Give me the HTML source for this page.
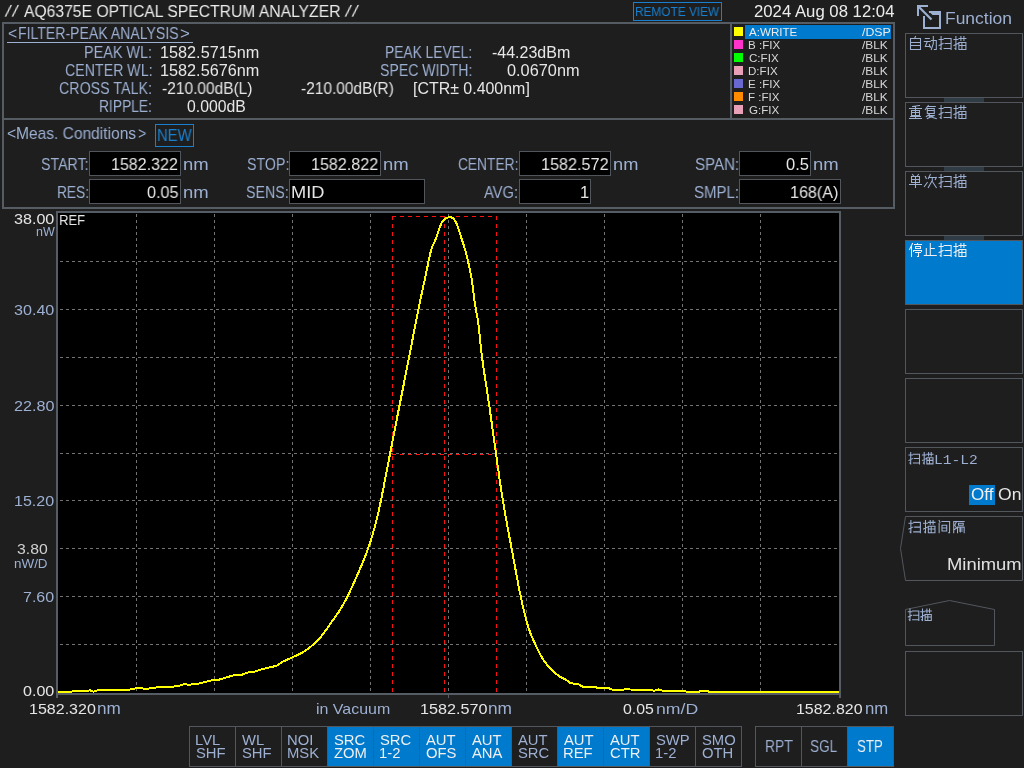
<!DOCTYPE html>
<html><head><meta charset="utf-8"><style>
html,body{margin:0;padding:0;}
body{width:1024px;height:768px;overflow:hidden;background:#1e1e1e;position:relative;font-family:"Liberation Sans", sans-serif;}
.t{position:absolute;white-space:nowrap;transform-origin:0 0;will-change:transform;}
.r{position:absolute;box-sizing:border-box;}
svg{position:absolute;left:0;top:0;}
</style></head><body>
<div class="t" style="left:4.40px;top:3.00px;font-size:17.0px;line-height:17.0px;color:#ececec;transform:skewX(-12deg);transform-origin:0 100%;">/</div>
<div class="t" style="left:11.20px;top:3.00px;font-size:17.0px;line-height:17.0px;color:#ececec;transform:skewX(-12deg);transform-origin:0 100%;">/</div>
<div class="t" style="left:344.40px;top:3.00px;font-size:17.0px;line-height:17.0px;color:#ececec;transform:skewX(-12deg);transform-origin:0 100%;">/</div>
<div class="t" style="left:351.20px;top:3.00px;font-size:17.0px;line-height:17.0px;color:#ececec;transform:skewX(-12deg);transform-origin:0 100%;">/</div>
<div class="t" style="left:23.92px;top:3.00px;font-size:16.5px;line-height:16.5px;color:#ececec;transform:scaleX(0.9507);">AQ6375E OPTICAL SPECTRUM ANALYZER</div>
<div class="r" style="left:633px;top:2px;width:89px;height:19px;border:1px solid #1880cf;"></div>
<div class="t" style="left:634.65px;top:6.00px;font-size:12.5px;line-height:12.5px;color:#1880cf;transform:scaleX(0.9468);">REMOTE VIEW</div>
<div class="t" style="left:753.96px;top:3.00px;font-size:16.5px;line-height:16.5px;color:#ececec;transform:scaleX(1.0139);">2024 Aug 08 12:04</div>
<div class="t" style="left:945.20px;top:10.00px;font-size:16.5px;line-height:16.5px;color:#9db0d2;transform:scaleX(1.0577);">Function</div>
<svg width="1024" height="768" style="position:absolute;left:0;top:0">
<path d="M918,16 V6 H928" fill="none" stroke="#9db0d2" stroke-width="2"/>
<path d="M919,7 L931.5,19.5" fill="none" stroke="#9db0d2" stroke-width="2.2"/>
<path d="M924,16 V28 H940 V12 H929" fill="none" stroke="#9db0d2" stroke-width="2"/>
<path d="M928.5,11 H941 V15 H932.5 Z" fill="#9db0d2"/>
</svg>
<div class="r" style="left:2px;top:22px;width:893px;height:187px;border:2px solid #565c64;"></div>
<div class="r" style="left:2px;top:118px;width:893px;height:2px;background:#565c64;"></div>
<div class="r" style="left:730px;top:22px;width:2px;height:97px;background:#565c64;"></div>
<div class="t" style="left:7.95px;top:26.00px;font-size:15.7px;line-height:15.7px;color:#9db0d2;transform:scaleX(0.9587);">&lt;</div>
<div class="t" style="left:17.67px;top:26.00px;font-size:15.7px;line-height:15.7px;color:#9db0d2;transform:scaleX(0.8969);">FILTER-PEAK ANALYSIS</div>
<div class="t" style="left:179.65px;top:26.00px;font-size:15.7px;line-height:15.7px;color:#9db0d2;transform:scaleX(1.0769);">&gt;</div>
<div class="r" style="left:7px;top:42px;width:186px;height:1px;background:#9db0d2;"></div>
<div class="t" style="left:84.45px;top:45.00px;font-size:15.7px;line-height:15.7px;color:#9db0d2;transform:scaleX(0.9183);">PEAK WL:</div>
<div class="t" style="left:64.89px;top:63.00px;font-size:15.7px;line-height:15.7px;color:#9db0d2;transform:scaleX(0.9049);">CENTER WL:</div>
<div class="t" style="left:59.49px;top:81.00px;font-size:15.7px;line-height:15.7px;color:#9db0d2;transform:scaleX(0.9085);">CROSS TALK:</div>
<div class="t" style="left:99.49px;top:99.00px;font-size:15.7px;line-height:15.7px;color:#9db0d2;transform:scaleX(0.8806);">RIPPLE:</div>
<div class="t" style="left:160.08px;top:45.00px;font-size:15.7px;line-height:15.7px;color:#e6e6e6;transform:scaleX(1.0351);">1582.5715nm</div>
<div class="t" style="left:160.08px;top:63.00px;font-size:15.7px;line-height:15.7px;color:#e6e6e6;transform:scaleX(1.0351);">1582.5676nm</div>
<div class="t" style="left:162.00px;top:81.00px;font-size:15.7px;line-height:15.7px;color:#e6e6e6;transform:scaleX(0.9882);">-210.00dB(L)</div>
<div class="t" style="left:186.67px;top:99.00px;font-size:15.7px;line-height:15.7px;color:#e6e6e6;transform:scaleX(1.0058);">0.000dB</div>
<div class="t" style="left:385.20px;top:45.00px;font-size:15.7px;line-height:15.7px;color:#9db0d2;transform:scaleX(0.8782);">PEAK LEVEL:</div>
<div class="t" style="left:379.97px;top:63.00px;font-size:15.7px;line-height:15.7px;color:#9db0d2;transform:scaleX(0.8969);">SPEC WIDTH:</div>
<div class="t" style="left:491.78px;top:45.00px;font-size:15.7px;line-height:15.7px;color:#e6e6e6;transform:scaleX(1.0194);">-44.23dBm</div>
<div class="t" style="left:506.85px;top:63.00px;font-size:15.7px;line-height:15.7px;color:#e6e6e6;transform:scaleX(1.0405);">0.0670nm</div>
<div class="t" style="left:301.20px;top:81.00px;font-size:15.7px;line-height:15.7px;color:#e6e6e6;transform:scaleX(0.9854);">-210.00dB(R)</div>
<div class="t" style="left:413.28px;top:81.00px;font-size:15.7px;line-height:15.7px;color:#e6e6e6;transform:scaleX(1.0159);">[CTR± 0.400nm]</div>
<div class="r" style="left:745px;top:25px;width:146px;height:14px;background:#007acc;"></div>
<div class="r" style="left:734px;top:27px;width:9px;height:9px;background:#ffff00;"></div>
<div class="t" style="left:749.34px;top:26.00px;font-size:11.6px;line-height:11.6px;color:#ececec;">A:WRITE</div>
<div class="t" style="left:861.80px;top:26.00px;font-size:11.6px;line-height:11.6px;color:#ececec;transform:scaleX(1.0662);">/DSP</div>
<div class="r" style="left:734px;top:40px;width:9px;height:9px;background:#ff33cc;"></div>
<div class="t" style="left:748.47px;top:39.00px;font-size:11.6px;line-height:11.6px;color:#d8d8d8;">B :FIX</div>
<div class="t" style="left:861.80px;top:39.00px;font-size:11.6px;line-height:11.6px;color:#d8d8d8;transform:scaleX(1.0241);">/BLK</div>
<div class="r" style="left:734px;top:53px;width:9px;height:9px;background:#00ff00;"></div>
<div class="t" style="left:748.82px;top:52.00px;font-size:11.6px;line-height:11.6px;color:#d8d8d8;">C:FIX</div>
<div class="t" style="left:861.80px;top:52.00px;font-size:11.6px;line-height:11.6px;color:#d8d8d8;transform:scaleX(1.0241);">/BLK</div>
<div class="r" style="left:734px;top:66px;width:9px;height:9px;background:#e8a0b8;"></div>
<div class="t" style="left:748.47px;top:65.00px;font-size:11.6px;line-height:11.6px;color:#d8d8d8;">D:FIX</div>
<div class="t" style="left:861.80px;top:65.00px;font-size:11.6px;line-height:11.6px;color:#d8d8d8;transform:scaleX(1.0241);">/BLK</div>
<div class="r" style="left:734px;top:79px;width:9px;height:9px;background:#6868d0;"></div>
<div class="t" style="left:748.47px;top:78.00px;font-size:11.6px;line-height:11.6px;color:#d8d8d8;">E :FIX</div>
<div class="t" style="left:861.80px;top:78.00px;font-size:11.6px;line-height:11.6px;color:#d8d8d8;transform:scaleX(1.0241);">/BLK</div>
<div class="r" style="left:734px;top:92px;width:9px;height:9px;background:#ff8c00;"></div>
<div class="t" style="left:748.47px;top:91.00px;font-size:11.6px;line-height:11.6px;color:#d8d8d8;">F :FIX</div>
<div class="t" style="left:861.80px;top:91.00px;font-size:11.6px;line-height:11.6px;color:#d8d8d8;transform:scaleX(1.0241);">/BLK</div>
<div class="r" style="left:734px;top:105px;width:9px;height:9px;background:#e8a0b8;"></div>
<div class="t" style="left:748.82px;top:104.00px;font-size:11.6px;line-height:11.6px;color:#d8d8d8;">G:FIX</div>
<div class="t" style="left:861.80px;top:104.00px;font-size:11.6px;line-height:11.6px;color:#d8d8d8;transform:scaleX(1.0241);">/BLK</div>
<div class="t" style="left:6.73px;top:126.00px;font-size:15.7px;line-height:15.7px;color:#9db0d2;transform:scaleX(0.9850);">&lt;</div>
<div class="t" style="left:16.46px;top:126.00px;font-size:15.7px;line-height:15.7px;color:#9db0d2;transform:scaleX(0.9910);">Meas. Conditions</div>
<div class="t" style="left:138.29px;top:126.00px;font-size:15.7px;line-height:15.7px;color:#9db0d2;transform:scaleX(0.9062);">&gt;</div>
<div class="r" style="left:155px;top:124px;width:39px;height:23px;border:1px solid #1880cf;"></div>
<div class="t" style="left:156.81px;top:128.00px;font-size:16.0px;line-height:16.0px;color:#1880cf;transform:scaleX(0.9278);">NEW</div>
<div class="r" style="left:89px;top:151px;width:92px;height:25px;background:#000;border:1px solid #51565d;"></div>
<div class="r" style="left:89px;top:179px;width:92px;height:25px;background:#000;border:1px solid #51565d;"></div>
<div class="r" style="left:289px;top:151px;width:92px;height:25px;background:#000;border:1px solid #51565d;"></div>
<div class="r" style="left:289px;top:179px;width:136px;height:25px;background:#000;border:1px solid #51565d;"></div>
<div class="r" style="left:519px;top:151px;width:92px;height:25px;background:#000;border:1px solid #51565d;"></div>
<div class="r" style="left:519px;top:179px;width:72px;height:25px;background:#000;border:1px solid #51565d;"></div>
<div class="r" style="left:739px;top:151px;width:72px;height:25px;background:#000;border:1px solid #51565d;"></div>
<div class="r" style="left:739px;top:179px;width:102px;height:25px;background:#000;border:1px solid #51565d;"></div>
<div class="t" style="left:40.96px;top:157.00px;font-size:15.7px;line-height:15.7px;color:#9db0d2;transform:scaleX(0.9054);">START:</div>
<div class="t" style="left:56.50px;top:185.00px;font-size:15.7px;line-height:15.7px;color:#9db0d2;transform:scaleX(0.8758);">RES:</div>
<div class="t" style="left:246.56px;top:157.00px;font-size:15.7px;line-height:15.7px;color:#9db0d2;transform:scaleX(0.9045);">STOP:</div>
<div class="t" style="left:246.16px;top:185.00px;font-size:15.7px;line-height:15.7px;color:#9db0d2;transform:scaleX(0.9071);">SENS:</div>
<div class="t" style="left:457.91px;top:157.00px;font-size:15.7px;line-height:15.7px;color:#9db0d2;transform:scaleX(0.8763);">CENTER:</div>
<div class="t" style="left:484.33px;top:185.00px;font-size:15.7px;line-height:15.7px;color:#9db0d2;transform:scaleX(0.9353);">AVG:</div>
<div class="t" style="left:694.82px;top:157.00px;font-size:15.7px;line-height:15.7px;color:#9db0d2;transform:scaleX(0.9611);">SPAN:</div>
<div class="t" style="left:693.92px;top:185.00px;font-size:15.7px;line-height:15.7px;color:#9db0d2;transform:scaleX(0.9560);">SMPL:</div>
<div class="t" style="left:111.40px;top:156.00px;font-size:16.5px;line-height:16.5px;color:#e6e6e6;transform:scaleX(0.9709);">1582.322</div>
<div class="t" style="left:146.65px;top:184.00px;font-size:16.5px;line-height:16.5px;color:#e6e6e6;transform:scaleX(0.9781);">0.05</div>
<div class="t" style="left:311.49px;top:156.00px;font-size:16.5px;line-height:16.5px;color:#e6e6e6;transform:scaleX(0.9754);">1582.822</div>
<div class="t" style="left:290.84px;top:184.00px;font-size:16.5px;line-height:16.5px;color:#e6e6e6;transform:scaleX(1.1055);">MID</div>
<div class="t" style="left:541.19px;top:156.00px;font-size:16.5px;line-height:16.5px;color:#e6e6e6;transform:scaleX(0.9814);">1582.572</div>
<div class="t" style="left:579.76px;top:184.00px;font-size:16.5px;line-height:16.5px;color:#e6e6e6;">1</div>
<div class="t" style="left:785.64px;top:156.00px;font-size:16.5px;line-height:16.5px;color:#e6e6e6;transform:scaleX(0.9947);">0.5</div>
<div class="t" style="left:790.49px;top:184.00px;font-size:16.5px;line-height:16.5px;color:#e6e6e6;transform:scaleX(0.9773);">168(A)</div>
<div class="t" style="left:183.10px;top:156.00px;font-size:17.0px;line-height:17.0px;color:#9db0d2;transform:scaleX(1.0874);">nm</div>
<div class="t" style="left:183.10px;top:184.00px;font-size:17.0px;line-height:17.0px;color:#9db0d2;transform:scaleX(1.0874);">nm</div>
<div class="t" style="left:383.10px;top:156.00px;font-size:17.0px;line-height:17.0px;color:#9db0d2;transform:scaleX(1.0874);">nm</div>
<div class="t" style="left:613.11px;top:156.00px;font-size:17.0px;line-height:17.0px;color:#9db0d2;transform:scaleX(1.0734);">nm</div>
<div class="t" style="left:813.10px;top:156.00px;font-size:17.0px;line-height:17.0px;color:#9db0d2;transform:scaleX(1.0874);">nm</div>
<div class="r" style="left:56px;top:211px;width:785px;height:484px;background:#000;border:2px solid #565c64;"></div>
<div class="r" style="left:56px;top:695px;width:2px;height:3px;background:#565c64;"></div>
<div class="r" style="left:839px;top:695px;width:2px;height:3px;background:#565c64;"></div>
<div class="r" style="left:448px;top:695px;width:1px;height:3px;background:#565c64;"></div>
<svg width="1024" height="768" style="position:absolute;left:0;top:0" shape-rendering="crispEdges">
<path d="M136.5,214V693M214.5,214V693M292.5,214V693M370.5,214V693M448.5,214V693M526.5,214V693M604.5,214V693M682.5,214V693M760.5,214V693M60,261.5H839M60,309.5H839M60,357.5H839M60,405.5H839M60,453.5H839M60,500.5H839M60,548.5H839M60,596.5H839M60,644.5H839" stroke="#737373" stroke-width="1" stroke-dasharray="3 3" fill="none"/>
<path d="M392.5,216V693M444.5,216V693M496.5,216V693" stroke="#ff1010" stroke-width="1" stroke-dasharray="4 4" fill="none"/>
<path d="M392,216.5H497M392,454.5H497" stroke="#ff1010" stroke-width="1" stroke-dasharray="4 4" fill="none"/>
</svg>
<svg width="1024" height="768" style="position:absolute;left:0;top:0" shape-rendering="crispEdges"><path d="M58.3,691.8 L87.0,691.2 L90.0,690.2 L93.5,691.8 L97.0,690.4 L106.0,689.6 L110.7,690.0 L129.4,689.6 L135.7,688.4 L142.7,688.4 L146.6,689.0 L153.7,687.6 L171.6,686.8 L180.0,685.6 L184.1,684.0 L187.2,684.6 L195.0,684.4 L202.9,682.6 L209.9,680.6 L218.2,680.0 L220.5,679.2 L233.4,675.4 L241.6,674.8 L247.5,672.6 L254.5,671.8 L259.2,670.0 L276.8,665.7 L283.2,661.5 L284.5,661.0 L286.2,660.2 L288.4,659.2 L290.9,658.1 L292.5,657.3 L294.3,656.5 L296.2,655.6 L298.2,654.6 L300.2,653.7 L302.1,652.7 L303.8,651.7 L305.9,650.4 L307.8,649.0 L309.6,647.6 L311.3,646.2 L313.1,644.6 L314.6,643.3 L316.1,641.9 L317.5,640.5 L319.0,639.0 L320.4,637.3 L322.0,635.5 L323.2,633.9 L324.5,632.2 L325.8,630.4 L327.2,628.5 L328.5,626.6 L329.8,624.7 L331.0,622.9 L332.2,621.2 L333.6,619.2 L335.0,617.3 L336.2,615.6 L337.5,613.8 L338.7,612.0 L340.0,610.0 L341.0,608.4 L341.9,606.8 L342.9,605.1 L343.9,603.4 L344.8,601.7 L345.8,599.8 L346.8,598.0 L347.8,596.0 L348.7,594.2 L349.6,592.3 L350.5,590.3 L351.4,588.3 L352.4,586.2 L353.3,584.1 L354.2,582.1 L355.1,580.0 L356.0,578.0 L356.9,576.0 L357.8,574.0 L358.7,572.0 L359.5,569.9 L360.4,567.9 L361.3,565.9 L362.1,563.9 L362.9,562.0 L363.7,560.0 L364.5,558.1 L365.2,556.2 L365.9,554.4 L366.6,552.6 L367.3,550.8 L368.0,548.9 L368.6,547.0 L369.3,545.1 L370.0,543.0 L370.6,541.1 L371.2,539.1 L371.9,537.0 L372.5,534.9 L373.1,532.8 L373.7,530.6 L374.3,528.5 L374.9,526.3 L375.4,524.2 L376.0,522.0 L376.5,520.1 L376.9,518.4 L377.3,516.8 L377.7,515.2 L378.1,513.6 L378.5,511.9 L378.9,510.0 L379.4,508.0 L379.8,505.7 L380.4,503.1 L381.0,500.2 L381.3,498.7 L381.6,497.2 L381.9,495.5 L382.3,493.8 L382.6,492.0 L383.0,490.2 L383.4,488.3 L383.7,486.4 L384.1,484.4 L384.5,482.4 L384.9,480.3 L385.3,478.2 L385.7,476.1 L386.1,474.0 L386.6,471.9 L387.0,469.7 L387.4,467.6 L387.8,465.5 L388.2,463.3 L388.6,461.2 L389.0,459.1 L389.4,457.0 L389.8,455.0 L390.2,453.0 L390.6,451.0 L391.0,449.0 L391.4,447.0 L391.8,445.0 L392.1,443.1 L392.5,441.1 L392.9,439.1 L393.3,437.1 L393.7,435.1 L394.1,433.1 L394.5,431.1 L394.9,429.1 L395.3,427.0 L395.7,425.0 L396.1,423.0 L396.5,421.0 L396.8,419.0 L397.2,417.0 L397.6,415.0 L398.0,413.0 L398.4,411.0 L398.8,409.0 L399.2,407.0 L399.6,405.0 L400.0,403.0 L400.4,401.0 L400.8,399.0 L401.2,397.0 L401.6,395.0 L402.0,393.0 L402.4,391.0 L402.8,389.0 L403.2,387.0 L403.6,385.0 L404.0,383.0 L404.4,381.0 L404.7,379.0 L405.1,377.0 L405.5,375.0 L405.9,373.0 L406.3,371.0 L406.7,369.0 L407.1,367.0 L407.5,365.0 L407.9,363.0 L408.3,361.0 L408.7,359.0 L409.1,357.0 L409.5,355.0 L409.9,353.0 L410.3,350.9 L410.7,348.9 L411.1,346.8 L411.5,344.7 L411.9,342.7 L412.3,340.6 L412.7,338.5 L413.1,336.4 L413.5,334.3 L413.9,332.3 L414.3,330.2 L414.7,328.2 L415.1,326.2 L415.5,324.1 L415.9,322.2 L416.3,320.2 L416.7,318.2 L417.0,316.3 L417.4,314.4 L417.8,312.6 L418.1,310.8 L418.5,309.0 L419.0,306.7 L419.5,304.4 L419.9,302.1 L420.4,299.8 L420.9,297.6 L421.3,295.4 L421.8,293.3 L422.2,291.2 L422.7,289.1 L423.1,287.1 L423.5,285.1 L423.9,283.2 L424.4,281.3 L424.8,279.4 L425.2,277.6 L425.5,275.9 L425.9,274.1 L426.2,272.5 L426.8,269.9 L427.3,267.5 L427.8,265.2 L428.2,263.0 L428.6,260.9 L429.0,259.0 L429.4,257.2 L429.8,255.4 L430.2,253.7 L430.6,252.1 L431.0,250.6 L431.8,248.1 L432.6,246.0 L433.4,244.2 L434.2,242.6 L434.9,241.1 L435.6,239.5 L436.5,237.1 L437.2,234.9 L437.9,232.9 L438.5,231.0 L439.6,228.0 L440.5,225.5 L441.4,223.4 L442.3,221.7 L443.5,220.1 L445.0,218.8 L446.8,217.8 L448.7,217.2 L450.6,217.2 L452.5,217.8 L454.1,219.4 L455.6,221.7 L456.5,223.5 L457.3,225.5 L458.2,228.0 L458.8,229.7 L459.4,231.6 L460.0,233.6 L460.7,235.8 L461.4,238.0 L462.0,240.0 L462.7,242.0 L463.4,244.1 L464.0,246.3 L464.7,248.5 L465.3,250.6 L465.9,252.7 L466.4,254.7 L466.9,256.7 L467.4,258.7 L467.9,260.8 L468.4,263.1 L468.9,265.1 L469.3,267.1 L469.8,269.2 L470.2,271.3 L470.7,273.6 L471.1,276.1 L471.6,278.8 L471.9,280.6 L472.2,282.5 L472.4,284.6 L472.7,286.7 L473.0,288.9 L473.2,291.1 L473.5,293.3 L473.8,295.6 L474.1,297.8 L474.4,300.0 L474.7,302.2 L475.0,304.3 L475.4,306.3 L475.7,308.4 L476.1,310.4 L476.4,312.4 L476.8,314.4 L477.2,316.5 L477.6,318.6 L477.9,320.9 L478.3,323.2 L478.6,325.6 L478.8,327.4 L479.0,329.3 L479.3,331.1 L479.4,333.0 L479.6,334.8 L479.8,336.8 L480.0,338.7 L480.2,340.8 L480.4,342.8 L480.6,345.0 L480.8,347.2 L481.1,349.5 L481.4,351.9 L481.7,354.4 L482.0,357.0 L482.2,358.7 L482.5,360.4 L482.7,362.2 L483.0,364.1 L483.3,366.0 L483.5,367.9 L483.8,369.8 L484.1,371.8 L484.4,373.9 L484.8,375.9 L485.1,378.0 L485.4,380.1 L485.7,382.2 L486.0,384.3 L486.4,386.4 L486.7,388.6 L487.0,390.7 L487.3,392.8 L487.7,394.9 L488.0,397.0 L488.3,399.1 L488.6,401.2 L488.9,403.3 L489.2,405.3 L489.5,407.3 L489.8,409.3 L490.1,411.4 L490.4,413.4 L490.6,415.4 L490.9,417.4 L491.2,419.5 L491.5,421.5 L491.8,423.5 L492.1,425.6 L492.3,427.6 L492.6,429.6 L492.9,431.6 L493.2,433.7 L493.5,435.7 L493.7,437.7 L494.0,439.7 L494.3,441.7 L494.6,443.7 L494.9,445.7 L495.2,447.7 L495.4,449.7 L495.7,451.7 L496.0,453.7 L496.3,455.8 L496.6,457.8 L496.9,459.9 L497.2,461.9 L497.4,463.9 L497.7,465.9 L498.0,468.0 L498.3,470.0 L498.6,472.0 L498.8,474.0 L499.1,476.0 L499.4,478.0 L499.7,480.0 L500.0,482.0 L500.3,484.0 L500.6,486.1 L500.9,488.1 L501.2,490.1 L501.5,492.1 L501.8,494.2 L502.1,496.2 L502.5,498.2 L502.8,500.3 L503.1,502.3 L503.5,504.3 L503.8,506.3 L504.1,508.2 L504.5,510.2 L504.9,512.2 L505.2,514.3 L505.6,516.3 L505.9,518.3 L506.3,520.3 L506.7,522.3 L507.1,524.3 L507.4,526.3 L507.8,528.4 L508.2,530.4 L508.6,532.4 L509.0,534.4 L509.3,536.4 L509.7,538.5 L510.1,540.5 L510.5,542.5 L510.8,544.5 L511.2,546.5 L511.6,548.5 L512.0,550.5 L512.4,552.6 L512.7,554.6 L513.1,556.7 L513.5,558.8 L513.9,560.9 L514.3,563.0 L514.7,565.2 L515.1,567.3 L515.5,569.4 L515.9,571.5 L516.2,573.6 L516.6,575.7 L517.0,577.8 L517.4,579.8 L517.8,581.8 L518.2,583.8 L518.5,585.7 L518.9,587.6 L519.3,589.5 L519.6,591.3 L520.0,593.0 L520.4,594.8 L520.7,596.4 L521.2,598.9 L521.8,601.3 L522.3,603.7 L522.8,605.9 L523.3,608.0 L523.7,610.1 L524.2,612.1 L524.7,614.0 L525.2,615.8 L525.6,617.6 L526.1,619.4 L526.6,621.1 L527.0,622.7 L527.5,624.4 L528.0,626.0 L528.7,628.3 L529.5,630.5 L530.2,632.5 L530.9,634.4 L531.6,636.2 L532.4,637.9 L533.1,639.6 L533.9,641.3 L534.6,642.9 L535.4,644.6 L536.4,646.7 L537.4,648.8 L538.4,650.8 L539.4,652.8 L540.4,654.7 L541.4,656.5 L542.5,658.3 L543.5,659.9 L544.9,661.9 L546.3,663.8 L547.8,665.5 L549.2,667.1 L550.6,668.6 L552.0,670.0 L553.7,671.6 L555.3,673.1 L557.0,674.4 L558.5,675.6 L560.0,676.7 L562.4,678.1 L564.7,679.1 L566.2,679.8 L569.4,682.5 L574.0,683.8 L578.8,684.5 L583.4,686.9 L596.0,687.2 L597.5,688.0 L608.4,688.0 L611.6,689.5 L624.0,689.5 L626.4,688.8 L630.3,689.5 L644.4,690.3 L649.0,689.5 L653.8,690.8 L658.4,689.5 L663.0,690.8 L685.0,691.1 L686.6,691.9 L699.0,691.9 L700.6,690.8 L708.4,691.1 L709.2,691.9 L760.0,692.0 L761.0,691.4 L763.0,692.0 L838.8,692.0" stroke="#ffff00" stroke-width="2" fill="none" stroke-linejoin="round"/></svg>
<div class="t" style="left:14.36px;top:211.00px;font-size:15.5px;line-height:15.5px;color:#e6e6e6;transform:scaleX(1.0397);">38.00</div>
<div class="t" style="left:36.00px;top:226.00px;font-size:12.5px;line-height:12.5px;color:#9db0d2;transform:scaleX(0.9846);">nW</div>
<div class="t" style="left:58.75px;top:212.00px;font-size:15.0px;line-height:15.0px;color:#e6e6e6;transform:scaleX(0.8723);">REF</div>
<div class="t" style="left:14.36px;top:302.00px;font-size:15.5px;line-height:15.5px;color:#9db0d2;transform:scaleX(1.0397);">30.40</div>
<div class="t" style="left:14.19px;top:398.00px;font-size:15.5px;line-height:15.5px;color:#9db0d2;transform:scaleX(1.0440);">22.80</div>
<div class="t" style="left:14.40px;top:493.00px;font-size:15.5px;line-height:15.5px;color:#9db0d2;transform:scaleX(1.0360);">15.20</div>
<div class="t" style="left:16.87px;top:541.00px;font-size:15.5px;line-height:15.5px;color:#d0d0d0;transform:scaleX(1.0170);">3.80</div>
<div class="t" style="left:13.93px;top:558.00px;font-size:12.3px;line-height:12.3px;color:#9db0d2;transform:scaleX(1.0919);">nW/D</div>
<div class="t" style="left:23.40px;top:589.00px;font-size:15.5px;line-height:15.5px;color:#9db0d2;transform:scaleX(1.0330);">7.60</div>
<div class="t" style="left:23.36px;top:683.00px;font-size:15.5px;line-height:15.5px;color:#e6e6e6;transform:scaleX(1.0378);">0.00</div>
<div class="t" style="left:28.80px;top:701.00px;font-size:15.0px;line-height:15.0px;color:#e6e6e6;transform:scaleX(1.0686);">1582.320</div>
<div class="t" style="left:97.39px;top:700.00px;font-size:16.5px;line-height:16.5px;color:#9db0d2;transform:scaleX(1.0383);">nm</div>
<div class="t" style="left:316.16px;top:701.00px;font-size:15.0px;line-height:15.0px;color:#9db0d2;transform:scaleX(1.0649);">in Vacuum</div>
<div class="t" style="left:419.79px;top:701.00px;font-size:15.0px;line-height:15.0px;color:#e6e6e6;transform:scaleX(1.0785);">1582.570</div>
<div class="t" style="left:488.38px;top:700.00px;font-size:16.5px;line-height:16.5px;color:#9db0d2;transform:scaleX(1.0479);">nm</div>
<div class="t" style="left:623.37px;top:701.00px;font-size:15.0px;line-height:15.0px;color:#e6e6e6;transform:scaleX(1.0581);">0.05</div>
<div class="t" style="left:655.65px;top:701.00px;font-size:15.0px;line-height:15.0px;color:#9db0d2;transform:scaleX(1.1780);">nm/D</div>
<div class="t" style="left:796.10px;top:701.00px;font-size:15.0px;line-height:15.0px;color:#e6e6e6;transform:scaleX(1.0637);">1582.820</div>
<div class="t" style="left:864.91px;top:700.00px;font-size:16.5px;line-height:16.5px;color:#9db0d2;transform:scaleX(1.0141);">nm</div>
<div class="r" style="left:189px;top:726px;width:47px;height:41px;border:1px solid #52575e;"></div>
<div class="r" style="left:235px;top:726px;width:47px;height:41px;border:1px solid #52575e;"></div>
<div class="r" style="left:281px;top:726px;width:47px;height:41px;border:1px solid #52575e;"></div>
<div class="r" style="left:327px;top:726px;width:47px;height:41px;border:1px solid #52575e;background:#007acc;"></div>
<div class="r" style="left:373px;top:726px;width:47px;height:41px;border:1px solid #52575e;background:#007acc;"></div>
<div class="r" style="left:419px;top:726px;width:47px;height:41px;border:1px solid #52575e;background:#007acc;"></div>
<div class="r" style="left:465px;top:726px;width:47px;height:41px;border:1px solid #52575e;background:#007acc;"></div>
<div class="r" style="left:511px;top:726px;width:47px;height:41px;border:1px solid #52575e;"></div>
<div class="r" style="left:557px;top:726px;width:47px;height:41px;border:1px solid #52575e;background:#007acc;"></div>
<div class="r" style="left:603px;top:726px;width:47px;height:41px;border:1px solid #52575e;background:#007acc;"></div>
<div class="r" style="left:649px;top:726px;width:47px;height:41px;border:1px solid #52575e;"></div>
<div class="r" style="left:695px;top:726px;width:47px;height:41px;border:1px solid #52575e;"></div>
<div class="t" style="left:195.32px;top:733.00px;font-size:14.8px;line-height:14.8px;color:#9db0d2;">LVL</div>
<div class="t" style="left:195.83px;top:746.00px;font-size:14.8px;line-height:14.8px;color:#9db0d2;">SHF</div>
<div class="t" style="left:242.43px;top:733.00px;font-size:14.8px;line-height:14.8px;color:#9db0d2;">WL</div>
<div class="t" style="left:241.83px;top:746.00px;font-size:14.8px;line-height:14.8px;color:#9db0d2;">SHF</div>
<div class="t" style="left:287.32px;top:733.00px;font-size:14.8px;line-height:14.8px;color:#9db0d2;">NOI</div>
<div class="t" style="left:287.32px;top:746.00px;font-size:14.8px;line-height:14.8px;color:#9db0d2;">MSK</div>
<div class="t" style="left:333.83px;top:733.00px;font-size:14.8px;line-height:14.8px;color:#f0f0f0;">SRC</div>
<div class="t" style="left:334.06px;top:746.00px;font-size:14.8px;line-height:14.8px;color:#f0f0f0;">ZOM</div>
<div class="t" style="left:379.83px;top:733.00px;font-size:14.8px;line-height:14.8px;color:#f0f0f0;">SRC</div>
<div class="t" style="left:379.39px;top:746.00px;font-size:14.8px;line-height:14.8px;color:#f0f0f0;">1-2</div>
<div class="t" style="left:426.43px;top:733.00px;font-size:14.8px;line-height:14.8px;color:#f0f0f0;">AUT</div>
<div class="t" style="left:425.83px;top:746.00px;font-size:14.8px;line-height:14.8px;color:#f0f0f0;">OFS</div>
<div class="t" style="left:472.43px;top:733.00px;font-size:14.8px;line-height:14.8px;color:#f0f0f0;">AUT</div>
<div class="t" style="left:472.43px;top:746.00px;font-size:14.8px;line-height:14.8px;color:#f0f0f0;">ANA</div>
<div class="t" style="left:518.43px;top:733.00px;font-size:14.8px;line-height:14.8px;color:#9db0d2;">AUT</div>
<div class="t" style="left:517.83px;top:746.00px;font-size:14.8px;line-height:14.8px;color:#9db0d2;">SRC</div>
<div class="t" style="left:564.43px;top:733.00px;font-size:14.8px;line-height:14.8px;color:#f0f0f0;">AUT</div>
<div class="t" style="left:563.32px;top:746.00px;font-size:14.8px;line-height:14.8px;color:#f0f0f0;">REF</div>
<div class="t" style="left:610.43px;top:733.00px;font-size:14.8px;line-height:14.8px;color:#f0f0f0;">AUT</div>
<div class="t" style="left:609.76px;top:746.00px;font-size:14.8px;line-height:14.8px;color:#f0f0f0;">CTR</div>
<div class="t" style="left:655.83px;top:733.00px;font-size:14.8px;line-height:14.8px;color:#9db0d2;">SWP</div>
<div class="t" style="left:655.39px;top:746.00px;font-size:14.8px;line-height:14.8px;color:#9db0d2;">1-2</div>
<div class="t" style="left:701.83px;top:733.00px;font-size:14.8px;line-height:14.8px;color:#9db0d2;">SMO</div>
<div class="t" style="left:701.83px;top:746.00px;font-size:14.8px;line-height:14.8px;color:#9db0d2;">OTH</div>
<div class="r" style="left:755px;top:726px;width:47px;height:41px;border:1px solid #52575e;"></div>
<div class="r" style="left:801px;top:726px;width:47px;height:41px;border:1px solid #52575e;"></div>
<div class="r" style="left:847px;top:726px;width:47px;height:41px;border:1px solid #52575e;background:#007acc;"></div>
<div class="t" style="left:764.60px;top:738.00px;font-size:16.5px;line-height:16.5px;color:#9db0d2;transform:scaleX(0.8357);">RPT</div>
<div class="t" style="left:809.99px;top:738.00px;font-size:16.5px;line-height:16.5px;color:#9db0d2;transform:scaleX(0.8249);">SGL</div>
<div class="t" style="left:857.30px;top:738.00px;font-size:16.5px;line-height:16.5px;color:#f0f0f0;transform:scaleX(0.8059);">STP</div>
<div class="r" style="left:905px;top:33px;width:118px;height:65px;border:1px solid #52575e;"></div>
<div class="r" style="left:905px;top:102px;width:118px;height:65px;border:1px solid #52575e;"></div>
<div class="r" style="left:905px;top:171px;width:118px;height:65px;border:1px solid #52575e;"></div>
<div class="r" style="left:905px;top:240px;width:118px;height:65px;border:1px solid #52575e;background:#007acc;"></div>
<div class="r" style="left:905px;top:309px;width:118px;height:65px;border:1px solid #52575e;"></div>
<div class="r" style="left:905px;top:378px;width:118px;height:65px;border:1px solid #52575e;"></div>
<div class="r" style="left:905px;top:447px;width:118px;height:65px;border:1px solid #52575e;"></div>
<div class="r" style="left:944px;top:98px;width:40px;height:4px;background:#2f3b45;"></div>
<div class="r" style="left:944px;top:167px;width:40px;height:4px;background:#2f3b45;"></div>
<div class="r" style="left:944px;top:236px;width:40px;height:4px;background:#2f3b45;"></div>
<svg width="1024" height="768" style="position:absolute;left:0;top:0"><path d="M905.5,516.5 H1022.5 V580.5 H905.5 L900.5,548.5 Z" fill="none" stroke="#52575e" stroke-width="1"/><path d="M905.5,645.5 V609.5 L949.5,600.5 L994.5,609.5 V645.5 Z" fill="none" stroke="#52575e" stroke-width="1"/></svg>
<div class="r" style="left:905px;top:651px;width:118px;height:65px;border:1px solid #52575e;"></div>
<div class="r" style="left:969px;top:485px;width:26px;height:20px;background:#007acc;"></div>
<div class="t" style="left:970.74px;top:486.00px;font-size:17.0px;line-height:17.0px;color:#f0f0f0;transform:scaleX(0.9919);">Off</div>
<div class="t" style="left:997.81px;top:486.00px;font-size:17.0px;line-height:17.0px;color:#e6e6e6;transform:scaleX(1.0324);">On</div>
<div class="t" style="left:946.93px;top:556.00px;font-size:17.0px;line-height:17.0px;color:#e0e0e0;transform:scaleX(1.0817);">Minimum</div>
<div class="t" style="left:934.32px;top:454.00px;font-size:13.5px;line-height:13.5px;color:#9db0d2;font-family:'Liberation Mono', monospace;transform:scaleX(1.0815);">L1-L2</div>
<svg width="1024" height="768" style="position:absolute;left:0;top:0"><g transform="translate(909.00,36.00) scale(1.0)"><path d="M6.5,0.5L5.5,2.5M1.5,2.5L11.5,2.5M1.5,13.5L11.5,13.5M1.5,2.5L1.5,13.5M11.5,2.5L11.5,13.5M1.5,6.5L11.5,6.5M1.5,9.5L11.5,9.5" stroke="#9db0d2" stroke-width="1.05" fill="none" stroke-linecap="square"/></g><g transform="translate(923.80,36.00) scale(1.0)"><path d="M1.5,2.5L5.5,2.5M0.5,5.5L6.5,5.5M3.5,5.5L1.5,10.5M1.5,10.5L6.5,10.5M5.5,8.5L6.5,11.5M7.5,4.5L12.5,4.5M12.5,4.5L12.5,13.5M12.5,13.5L10.5,13.5M9.5,0.5L9.5,7.5M9.5,7.5L7.5,13.5" stroke="#9db0d2" stroke-width="1.05" fill="none" stroke-linecap="square"/></g><g transform="translate(938.60,36.00) scale(1.0)"><path d="M0.5,3.5L4.5,3.5M2.5,0.5L2.5,13.5M2.5,13.5L1.5,12.5M0.5,9.5L4.5,7.5M5.5,2.5L12.5,2.5M6.5,7.5L12.5,7.5M5.5,12.5L12.5,12.5M12.5,2.5L12.5,13.5" stroke="#9db0d2" stroke-width="1.05" fill="none" stroke-linecap="square"/></g><g transform="translate(953.40,36.00) scale(1.0)"><path d="M0.5,3.5L4.5,3.5M2.5,0.5L2.5,13.5M2.5,13.5L1.5,12.5M0.5,9.5L4.5,7.5M5.5,2.5L12.5,2.5M7.5,0.5L7.5,4.5M10.5,0.5L10.5,4.5M5.5,6.5L12.5,6.5M5.5,13.5L12.5,13.5M5.5,6.5L5.5,13.5M12.5,6.5L12.5,13.5M5.5,9.5L12.5,9.5M8.5,6.5L8.5,13.5" stroke="#9db0d2" stroke-width="1.05" fill="none" stroke-linecap="square"/></g></svg>
<svg width="1024" height="768" style="position:absolute;left:0;top:0"><g transform="translate(909.00,105.00) scale(1.0)"><path d="M3.5,1.5L10.5,0.5M0.5,3.5L12.5,3.5M2.5,5.5L10.5,5.5M2.5,10.5L10.5,10.5M2.5,5.5L2.5,10.5M10.5,5.5L10.5,10.5M2.5,7.5L10.5,7.5M6.5,1.5L6.5,13.5M1.5,11.5L11.5,11.5M0.5,13.5L12.5,13.5" stroke="#9db0d2" stroke-width="1.05" fill="none" stroke-linecap="square"/></g><g transform="translate(923.80,105.00) scale(1.0)"><path d="M4.5,0.5L1.5,4.5M3.5,1.5L11.5,1.5M3.5,3.5L10.5,3.5M3.5,8.5L10.5,8.5M3.5,3.5L3.5,8.5M10.5,3.5L10.5,8.5M3.5,5.5L10.5,5.5M5.5,9.5L2.5,11.5M4.5,10.5L10.5,10.5M10.5,10.5L3.5,13.5M5.5,11.5L12.5,13.5" stroke="#9db0d2" stroke-width="1.05" fill="none" stroke-linecap="square"/></g><g transform="translate(938.60,105.00) scale(1.0)"><path d="M0.5,3.5L4.5,3.5M2.5,0.5L2.5,13.5M2.5,13.5L1.5,12.5M0.5,9.5L4.5,7.5M5.5,2.5L12.5,2.5M6.5,7.5L12.5,7.5M5.5,12.5L12.5,12.5M12.5,2.5L12.5,13.5" stroke="#9db0d2" stroke-width="1.05" fill="none" stroke-linecap="square"/></g><g transform="translate(953.40,105.00) scale(1.0)"><path d="M0.5,3.5L4.5,3.5M2.5,0.5L2.5,13.5M2.5,13.5L1.5,12.5M0.5,9.5L4.5,7.5M5.5,2.5L12.5,2.5M7.5,0.5L7.5,4.5M10.5,0.5L10.5,4.5M5.5,6.5L12.5,6.5M5.5,13.5L12.5,13.5M5.5,6.5L5.5,13.5M12.5,6.5L12.5,13.5M5.5,9.5L12.5,9.5M8.5,6.5L8.5,13.5" stroke="#9db0d2" stroke-width="1.05" fill="none" stroke-linecap="square"/></g></svg>
<svg width="1024" height="768" style="position:absolute;left:0;top:0"><g transform="translate(909.00,174.00) scale(1.0)"><path d="M3.5,0.5L4.5,1.5M9.5,0.5L8.5,1.5M2.5,2.5L10.5,2.5M2.5,8.5L10.5,8.5M2.5,2.5L2.5,8.5M10.5,2.5L10.5,8.5M2.5,5.5L10.5,5.5M6.5,2.5L6.5,13.5M0.5,10.5L12.5,10.5" stroke="#9db0d2" stroke-width="1.05" fill="none" stroke-linecap="square"/></g><g transform="translate(923.80,174.00) scale(1.0)"><path d="M1.5,2.5L2.5,4.5M0.5,12.5L3.5,8.5M6.5,0.5L4.5,4.5M5.5,3.5L12.5,3.5M12.5,3.5L11.5,5.5M8.5,4.5L8.5,6.5M8.5,6.5L4.5,13.5M8.5,7.5L12.5,13.5" stroke="#9db0d2" stroke-width="1.05" fill="none" stroke-linecap="square"/></g><g transform="translate(938.60,174.00) scale(1.0)"><path d="M0.5,3.5L4.5,3.5M2.5,0.5L2.5,13.5M2.5,13.5L1.5,12.5M0.5,9.5L4.5,7.5M5.5,2.5L12.5,2.5M6.5,7.5L12.5,7.5M5.5,12.5L12.5,12.5M12.5,2.5L12.5,13.5" stroke="#9db0d2" stroke-width="1.05" fill="none" stroke-linecap="square"/></g><g transform="translate(953.40,174.00) scale(1.0)"><path d="M0.5,3.5L4.5,3.5M2.5,0.5L2.5,13.5M2.5,13.5L1.5,12.5M0.5,9.5L4.5,7.5M5.5,2.5L12.5,2.5M7.5,0.5L7.5,4.5M10.5,0.5L10.5,4.5M5.5,6.5L12.5,6.5M5.5,13.5L12.5,13.5M5.5,6.5L5.5,13.5M12.5,6.5L12.5,13.5M5.5,9.5L12.5,9.5M8.5,6.5L8.5,13.5" stroke="#9db0d2" stroke-width="1.05" fill="none" stroke-linecap="square"/></g></svg>
<svg width="1024" height="768" style="position:absolute;left:0;top:0"><g transform="translate(909.00,243.00) scale(1.0)"><path d="M3.5,0.5L0.5,6.5M2.5,3.5L2.5,13.5M8.5,0.5L8.5,1.5M5.5,1.5L12.5,1.5M6.5,3.5L11.5,3.5M6.5,5.5L11.5,5.5M6.5,3.5L6.5,5.5M11.5,3.5L11.5,5.5M4.5,7.5L12.5,7.5M4.5,7.5L4.5,8.5M12.5,7.5L12.5,8.5M6.5,9.5L11.5,9.5M9.5,9.5L9.5,13.5M9.5,13.5L8.5,13.5" stroke="#f0f0f0" stroke-width="1.05" fill="none" stroke-linecap="square"/></g><g transform="translate(923.80,243.00) scale(1.0)"><path d="M6.5,0.5L6.5,12.5M6.5,5.5L10.5,5.5M2.5,5.5L2.5,12.5M0.5,12.5L12.5,12.5" stroke="#f0f0f0" stroke-width="1.05" fill="none" stroke-linecap="square"/></g><g transform="translate(938.60,243.00) scale(1.0)"><path d="M0.5,3.5L4.5,3.5M2.5,0.5L2.5,13.5M2.5,13.5L1.5,12.5M0.5,9.5L4.5,7.5M5.5,2.5L12.5,2.5M6.5,7.5L12.5,7.5M5.5,12.5L12.5,12.5M12.5,2.5L12.5,13.5" stroke="#f0f0f0" stroke-width="1.05" fill="none" stroke-linecap="square"/></g><g transform="translate(953.40,243.00) scale(1.0)"><path d="M0.5,3.5L4.5,3.5M2.5,0.5L2.5,13.5M2.5,13.5L1.5,12.5M0.5,9.5L4.5,7.5M5.5,2.5L12.5,2.5M7.5,0.5L7.5,4.5M10.5,0.5L10.5,4.5M5.5,6.5L12.5,6.5M5.5,13.5L12.5,13.5M5.5,6.5L5.5,13.5M12.5,6.5L12.5,13.5M5.5,9.5L12.5,9.5M8.5,6.5L8.5,13.5" stroke="#f0f0f0" stroke-width="1.05" fill="none" stroke-linecap="square"/></g></svg>
<svg width="1024" height="768" style="position:absolute;left:0;top:0"><g transform="translate(908.50,452.00) scale(0.88)"><path d="M0.5,3.5L4.5,3.5M2.5,0.5L2.5,13.5M2.5,13.5L1.5,12.5M0.5,9.5L4.5,7.5M5.5,2.5L12.5,2.5M6.5,7.5L12.5,7.5M5.5,12.5L12.5,12.5M12.5,2.5L12.5,13.5" stroke="#9db0d2" stroke-width="1.19" fill="none" stroke-linecap="square"/></g><g transform="translate(922.00,452.00) scale(0.88)"><path d="M0.5,3.5L4.5,3.5M2.5,0.5L2.5,13.5M2.5,13.5L1.5,12.5M0.5,9.5L4.5,7.5M5.5,2.5L12.5,2.5M7.5,0.5L7.5,4.5M10.5,0.5L10.5,4.5M5.5,6.5L12.5,6.5M5.5,13.5L12.5,13.5M5.5,6.5L5.5,13.5M12.5,6.5L12.5,13.5M5.5,9.5L12.5,9.5M8.5,6.5L8.5,13.5" stroke="#9db0d2" stroke-width="1.19" fill="none" stroke-linecap="square"/></g></svg>
<svg width="1024" height="768" style="position:absolute;left:0;top:0"><g transform="translate(908.50,520.00) scale(0.95)"><path d="M0.5,3.5L4.5,3.5M2.5,0.5L2.5,13.5M2.5,13.5L1.5,12.5M0.5,9.5L4.5,7.5M5.5,2.5L12.5,2.5M6.5,7.5L12.5,7.5M5.5,12.5L12.5,12.5M12.5,2.5L12.5,13.5" stroke="#9db0d2" stroke-width="1.11" fill="none" stroke-linecap="square"/></g><g transform="translate(923.10,520.00) scale(0.95)"><path d="M0.5,3.5L4.5,3.5M2.5,0.5L2.5,13.5M2.5,13.5L1.5,12.5M0.5,9.5L4.5,7.5M5.5,2.5L12.5,2.5M7.5,0.5L7.5,4.5M10.5,0.5L10.5,4.5M5.5,6.5L12.5,6.5M5.5,13.5L12.5,13.5M5.5,6.5L5.5,13.5M12.5,6.5L12.5,13.5M5.5,9.5L12.5,9.5M8.5,6.5L8.5,13.5" stroke="#9db0d2" stroke-width="1.11" fill="none" stroke-linecap="square"/></g><g transform="translate(937.70,520.00) scale(0.95)"><path d="M1.5,0.5L2.5,2.5M1.5,3.5L1.5,13.5M4.5,1.5L12.5,1.5M12.5,1.5L12.5,13.5M12.5,13.5L11.5,13.5M4.5,5.5L9.5,5.5M4.5,11.5L9.5,11.5M4.5,5.5L4.5,11.5M9.5,5.5L9.5,11.5M4.5,8.5L9.5,8.5" stroke="#9db0d2" stroke-width="1.11" fill="none" stroke-linecap="square"/></g><g transform="translate(952.30,520.00) scale(0.95)"><path d="M1.5,1.5L1.5,13.5M1.5,1.5L4.5,1.5M4.5,1.5L2.5,5.5M2.5,5.5L4.5,8.5M4.5,8.5L1.5,10.5M5.5,1.5L12.5,1.5M6.5,3.5L11.5,3.5M6.5,5.5L11.5,5.5M6.5,3.5L6.5,5.5M11.5,3.5L11.5,5.5M5.5,7.5L12.5,7.5M5.5,7.5L5.5,13.5M12.5,7.5L12.5,13.5M7.5,9.5L10.5,9.5M8.5,8.5L8.5,12.5M7.5,11.5L10.5,11.5" stroke="#9db0d2" stroke-width="1.11" fill="none" stroke-linecap="square"/></g></svg>
<svg width="1024" height="768" style="position:absolute;left:0;top:0"><g transform="translate(907.80,608.70) scale(0.88)"><path d="M0.5,3.5L4.5,3.5M2.5,0.5L2.5,13.5M2.5,13.5L1.5,12.5M0.5,9.5L4.5,7.5M5.5,2.5L12.5,2.5M6.5,7.5L12.5,7.5M5.5,12.5L12.5,12.5M12.5,2.5L12.5,13.5" stroke="#9db0d2" stroke-width="1.19" fill="none" stroke-linecap="square"/></g><g transform="translate(920.30,608.70) scale(0.88)"><path d="M0.5,3.5L4.5,3.5M2.5,0.5L2.5,13.5M2.5,13.5L1.5,12.5M0.5,9.5L4.5,7.5M5.5,2.5L12.5,2.5M7.5,0.5L7.5,4.5M10.5,0.5L10.5,4.5M5.5,6.5L12.5,6.5M5.5,13.5L12.5,13.5M5.5,6.5L5.5,13.5M12.5,6.5L12.5,13.5M5.5,9.5L12.5,9.5M8.5,6.5L8.5,13.5" stroke="#9db0d2" stroke-width="1.19" fill="none" stroke-linecap="square"/></g></svg>
</body></html>
